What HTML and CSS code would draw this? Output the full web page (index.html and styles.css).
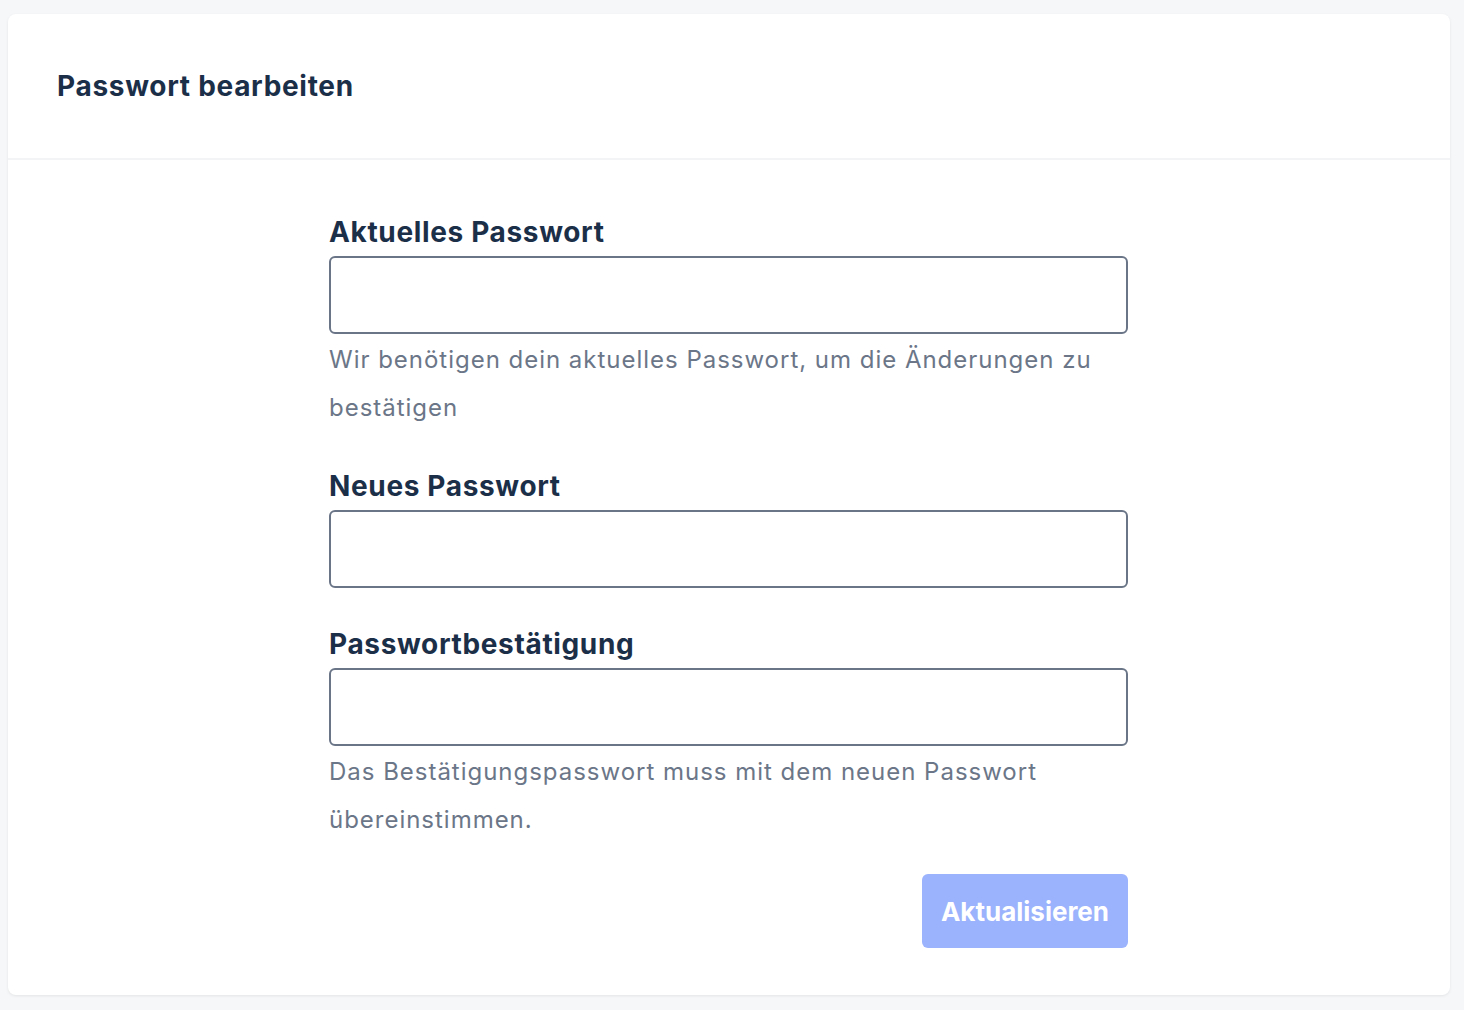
FILE: index.html
```html
<!DOCTYPE html>
<html lang="de">
<head>
<meta charset="utf-8">
<title>Passwort bearbeiten</title>
<link rel="stylesheet" href="styles.css">
</head>
<body>
<div class="page">
  <section class="card">
    <header class="card-header">
      <h1 class="card-title">Passwort bearbeiten</h1>
    </header>
    <form class="card-body">
      <div class="form">
        <div class="field field-first">
          <label class="label" for="current">Aktuelles Passwort</label>
          <input class="input" id="current" type="password">
          <p class="help">Wir benötigen dein aktuelles Passwort, um die Änderungen zu bestätigen</p>
        </div>
        <div class="field">
          <label class="label" for="new">Neues Passwort</label>
          <input class="input" id="new" type="password">
        </div>
        <div class="field field-last">
          <label class="label" for="confirm">Passwortbestätigung</label>
          <input class="input" id="confirm" type="password">
          <p class="help">Das Bestätigungspasswort muss mit dem neuen Passwort übereinstimmen.</p>
        </div>
        <div class="actions">
          <button class="button" type="button">Aktualisieren</button>
        </div>
      </div>
    </form>
  </section>
</div>
</body>
</html>
```
FILE: styles.css
```css
html, body {
  margin: 0;
  padding: 0;
  background: #f6f7f9;
  font-family: Inter, "Open Sans", sans-serif;
}
.page {
  padding: 14px 14px 14px 8px;
}
.card {
  background: #ffffff;
  border-radius: 8px;
  box-shadow: 0 1px 3px rgba(0, 0, 0, 0.08);
}
.card-header {
  height: 144px;
  display: flex;
  align-items: center;
  padding: 0 49px;
  border-bottom: 2px solid #f3f4f6;
}
.card-title {
  margin: 0;
  font-size: 28px;
  font-weight: 700;
  color: #1c2f49;
  letter-spacing: 0.7px;
}
.card-body {
  padding: 52px 0 47px;
  margin: 0;
}
.form {
  width: 799px;
  margin-left: 321px;
}
.field {
  display: flex;
  flex-direction: column;
  margin-bottom: 36px;
}
.field-first {
  margin-bottom: 34px;
}
.field-last {
  margin-bottom: 30px;
}
.label {
  font-size: 28px;
  line-height: 40px;
  font-weight: 700;
  color: #1c2f49;
  margin-bottom: 4px;
  letter-spacing: 0.65px;
}
.input {
  box-sizing: border-box;
  height: 78px;
  width: 100%;
  border: 2px solid #6b7588;
  border-radius: 6px;
  background: #fff;
  margin: 0;
}
.help {
  margin: 2px 0 0;
  font-size: 24px;
  line-height: 48px;
  color: #6b7688;
  letter-spacing: 0.98px;
}
.actions {
  display: flex;
  justify-content: flex-end;
}
.button {
  height: 74px;
  width: 206px;
  border: none;
  border-radius: 6px;
  background: #9bb2fc;
  color: #ffffff;
  font-family: Inter, "Open Sans", sans-serif;
  font-size: 26px;
  font-weight: 700;
}
```
